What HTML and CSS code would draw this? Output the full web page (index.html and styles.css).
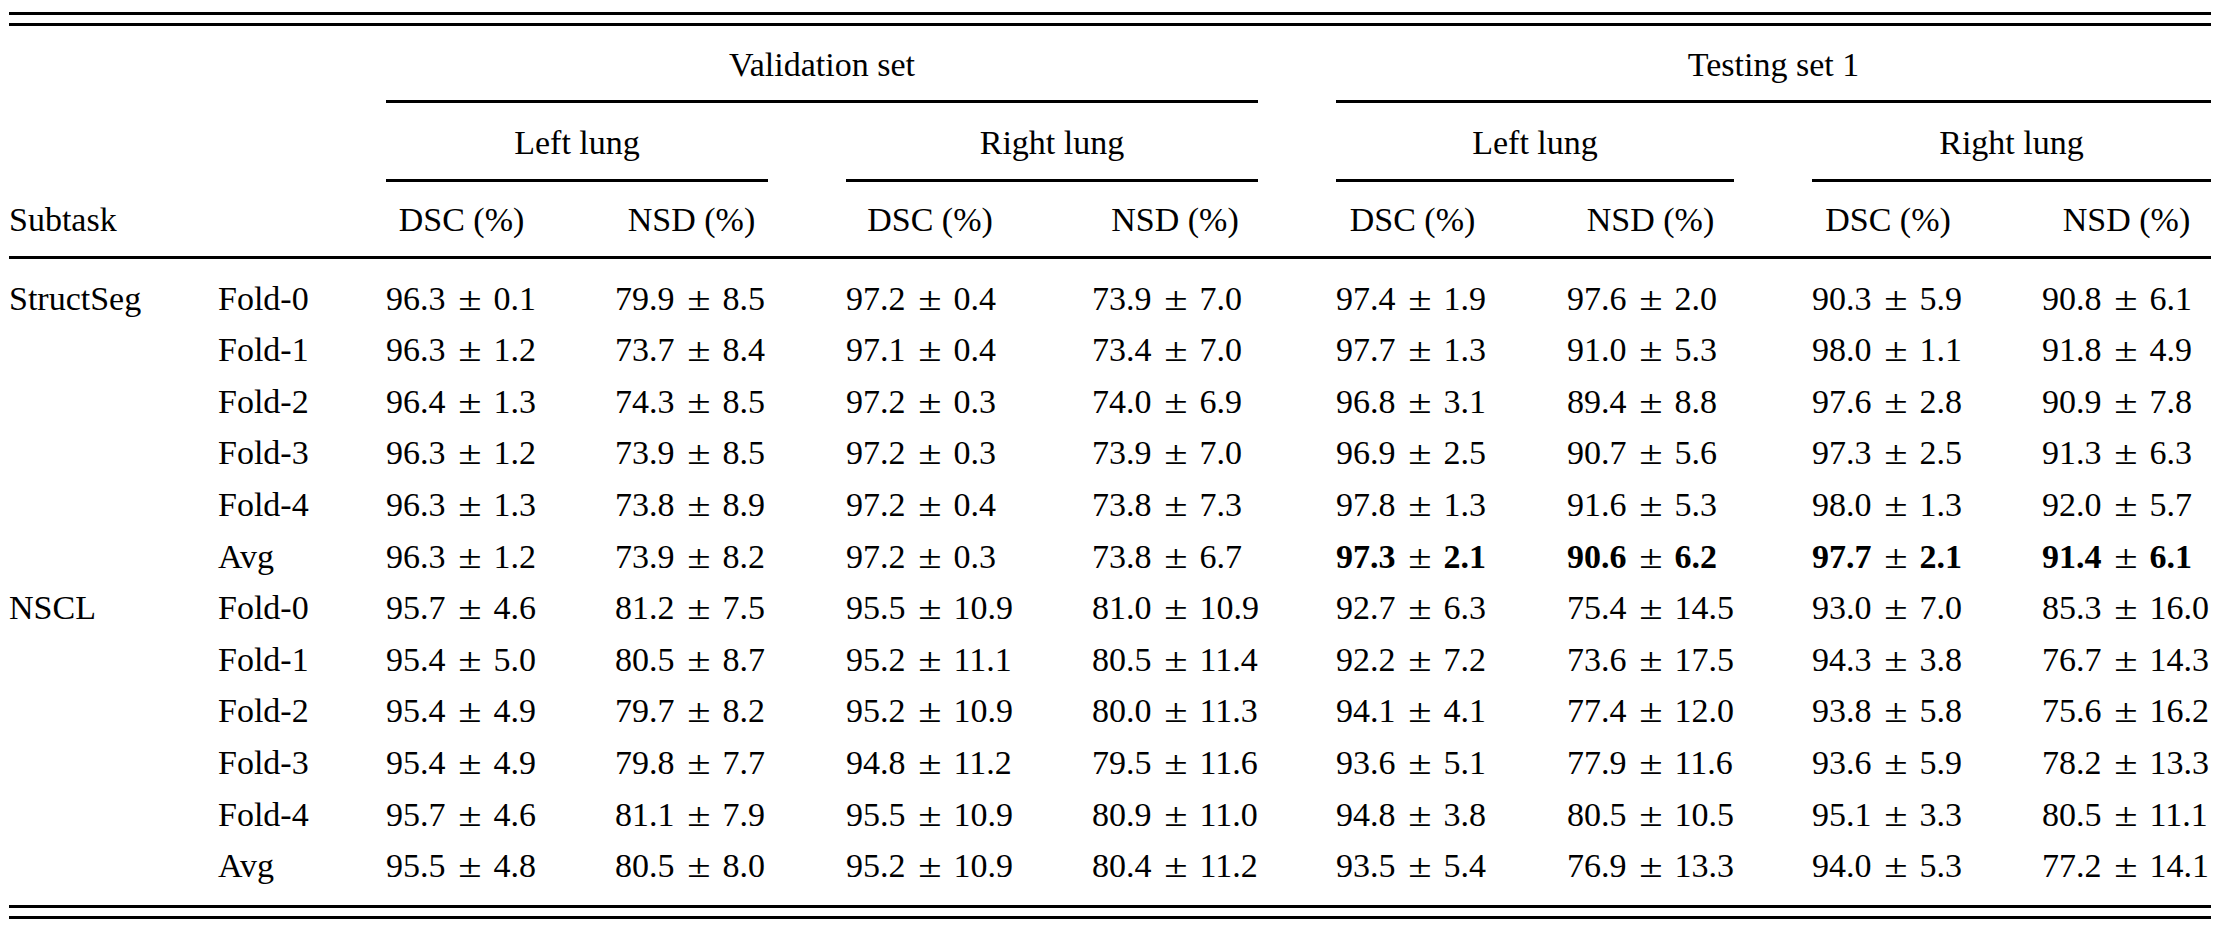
FILE: index.html
```html
<!DOCTYPE html>
<html lang="en">
<head>
<meta charset="utf-8">
<title>Results table</title>
<link rel="stylesheet" href="styles.css">
</head>
<body>
<div class="tbl">
  <div class="line"></div>
  <div class="line top2"></div>

  <div class="grid hrow h1">
    <div class="ctr span-val">Validation set</div>
    <div class="ctr span-test">Testing set 1</div>
  </div>
  <div class="grid cm1">
    <div class="line span-val"></div>
    <div class="line span-test"></div>
  </div>

  <div class="grid hrow h2">
    <div class="ctr span-vl">Left lung</div>
    <div class="ctr span-vr">Right lung</div>
    <div class="ctr span-tl">Left lung</div>
    <div class="ctr span-tr">Right lung</div>
  </div>
  <div class="grid cm2">
    <div class="line span-vl"></div>
    <div class="line span-vr"></div>
    <div class="line span-tl"></div>
    <div class="line span-tr"></div>
  </div>

  <div class="grid hrow h3">
    <div>Subtask</div>
    <div></div>
    <div class="ctr">DSC (%)</div>
    <div class="ctr">NSD (%)</div>
    <div class="ctr">DSC (%)</div>
    <div class="ctr">NSD (%)</div>
    <div class="ctr">DSC (%)</div>
    <div class="ctr">NSD (%)</div>
    <div class="ctr">DSC (%)</div>
    <div class="ctr">NSD (%)</div>
  </div>
  <div class="line mid"></div>

  <div class="tbody">
    <div class="grid row">
      <div>StructSeg</div><div>Fold-0</div>
      <div>96.3<span class="pm">±</span>0.1</div>
      <div>79.9<span class="pm">±</span>8.5</div>
      <div>97.2<span class="pm">±</span>0.4</div>
      <div>73.9<span class="pm">±</span>7.0</div>
      <div>97.4<span class="pm">±</span>1.9</div>
      <div>97.6<span class="pm">±</span>2.0</div>
      <div>90.3<span class="pm">±</span>5.9</div>
      <div>90.8<span class="pm">±</span>6.1</div>
    </div>
    <div class="grid row">
      <div></div><div>Fold-1</div>
      <div>96.3<span class="pm">±</span>1.2</div>
      <div>73.7<span class="pm">±</span>8.4</div>
      <div>97.1<span class="pm">±</span>0.4</div>
      <div>73.4<span class="pm">±</span>7.0</div>
      <div>97.7<span class="pm">±</span>1.3</div>
      <div>91.0<span class="pm">±</span>5.3</div>
      <div>98.0<span class="pm">±</span>1.1</div>
      <div>91.8<span class="pm">±</span>4.9</div>
    </div>
    <div class="grid row">
      <div></div><div>Fold-2</div>
      <div>96.4<span class="pm">±</span>1.3</div>
      <div>74.3<span class="pm">±</span>8.5</div>
      <div>97.2<span class="pm">±</span>0.3</div>
      <div>74.0<span class="pm">±</span>6.9</div>
      <div>96.8<span class="pm">±</span>3.1</div>
      <div>89.4<span class="pm">±</span>8.8</div>
      <div>97.6<span class="pm">±</span>2.8</div>
      <div>90.9<span class="pm">±</span>7.8</div>
    </div>
    <div class="grid row">
      <div></div><div>Fold-3</div>
      <div>96.3<span class="pm">±</span>1.2</div>
      <div>73.9<span class="pm">±</span>8.5</div>
      <div>97.2<span class="pm">±</span>0.3</div>
      <div>73.9<span class="pm">±</span>7.0</div>
      <div>96.9<span class="pm">±</span>2.5</div>
      <div>90.7<span class="pm">±</span>5.6</div>
      <div>97.3<span class="pm">±</span>2.5</div>
      <div>91.3<span class="pm">±</span>6.3</div>
    </div>
    <div class="grid row">
      <div></div><div>Fold-4</div>
      <div>96.3<span class="pm">±</span>1.3</div>
      <div>73.8<span class="pm">±</span>8.9</div>
      <div>97.2<span class="pm">±</span>0.4</div>
      <div>73.8<span class="pm">±</span>7.3</div>
      <div>97.8<span class="pm">±</span>1.3</div>
      <div>91.6<span class="pm">±</span>5.3</div>
      <div>98.0<span class="pm">±</span>1.3</div>
      <div>92.0<span class="pm">±</span>5.7</div>
    </div>
    <div class="grid row">
      <div></div><div>Avg</div>
      <div>96.3<span class="pm">±</span>1.2</div>
      <div>73.9<span class="pm">±</span>8.2</div>
      <div>97.2<span class="pm">±</span>0.3</div>
      <div>73.8<span class="pm">±</span>6.7</div>
      <div class="b">97.3<span class="pm">±</span>2.1</div>
      <div class="b">90.6<span class="pm">±</span>6.2</div>
      <div class="b">97.7<span class="pm">±</span>2.1</div>
      <div class="b">91.4<span class="pm">±</span>6.1</div>
    </div>
    <div class="grid row">
      <div>NSCL</div><div>Fold-0</div>
      <div>95.7<span class="pm">±</span>4.6</div>
      <div>81.2<span class="pm">±</span>7.5</div>
      <div>95.5<span class="pm">±</span>10.9</div>
      <div>81.0<span class="pm">±</span>10.9</div>
      <div>92.7<span class="pm">±</span>6.3</div>
      <div>75.4<span class="pm">±</span>14.5</div>
      <div>93.0<span class="pm">±</span>7.0</div>
      <div>85.3<span class="pm">±</span>16.0</div>
    </div>
    <div class="grid row">
      <div></div><div>Fold-1</div>
      <div>95.4<span class="pm">±</span>5.0</div>
      <div>80.5<span class="pm">±</span>8.7</div>
      <div>95.2<span class="pm">±</span>11.1</div>
      <div>80.5<span class="pm">±</span>11.4</div>
      <div>92.2<span class="pm">±</span>7.2</div>
      <div>73.6<span class="pm">±</span>17.5</div>
      <div>94.3<span class="pm">±</span>3.8</div>
      <div>76.7<span class="pm">±</span>14.3</div>
    </div>
    <div class="grid row">
      <div></div><div>Fold-2</div>
      <div>95.4<span class="pm">±</span>4.9</div>
      <div>79.7<span class="pm">±</span>8.2</div>
      <div>95.2<span class="pm">±</span>10.9</div>
      <div>80.0<span class="pm">±</span>11.3</div>
      <div>94.1<span class="pm">±</span>4.1</div>
      <div>77.4<span class="pm">±</span>12.0</div>
      <div>93.8<span class="pm">±</span>5.8</div>
      <div>75.6<span class="pm">±</span>16.2</div>
    </div>
    <div class="grid row">
      <div></div><div>Fold-3</div>
      <div>95.4<span class="pm">±</span>4.9</div>
      <div>79.8<span class="pm">±</span>7.7</div>
      <div>94.8<span class="pm">±</span>11.2</div>
      <div>79.5<span class="pm">±</span>11.6</div>
      <div>93.6<span class="pm">±</span>5.1</div>
      <div>77.9<span class="pm">±</span>11.6</div>
      <div>93.6<span class="pm">±</span>5.9</div>
      <div>78.2<span class="pm">±</span>13.3</div>
    </div>
    <div class="grid row">
      <div></div><div>Fold-4</div>
      <div>95.7<span class="pm">±</span>4.6</div>
      <div>81.1<span class="pm">±</span>7.9</div>
      <div>95.5<span class="pm">±</span>10.9</div>
      <div>80.9<span class="pm">±</span>11.0</div>
      <div>94.8<span class="pm">±</span>3.8</div>
      <div>80.5<span class="pm">±</span>10.5</div>
      <div>95.1<span class="pm">±</span>3.3</div>
      <div>80.5<span class="pm">±</span>11.1</div>
    </div>
    <div class="grid row">
      <div></div><div>Avg</div>
      <div>95.5<span class="pm">±</span>4.8</div>
      <div>80.5<span class="pm">±</span>8.0</div>
      <div>95.2<span class="pm">±</span>10.9</div>
      <div>80.4<span class="pm">±</span>11.2</div>
      <div>93.5<span class="pm">±</span>5.4</div>
      <div>76.9<span class="pm">±</span>13.3</div>
      <div>94.0<span class="pm">±</span>5.3</div>
      <div>77.2<span class="pm">±</span>14.1</div>
    </div>
  </div>

  <div class="line bot1"></div>
  <div class="line bot2"></div>
</div>
</body>
</html>
```

FILE: styles.css
```css
html, body {
  margin: 0;
  padding: 0;
  background: #ffffff;
}

body {
  font-family: "Liberation Serif", "Times New Roman", serif;
  font-size: 34px;
  color: #000000;
}

.tbl {
  width: 2202px;
  margin-left: 9px;
  padding-top: 12px;
}

.grid {
  display: grid;
  grid-template-columns: 131px 90px 151px 153px 168px 166px 153px 167px 152px 169px;
  column-gap: 78px;
}

.line {
  height: 3px;
  background: #000000;
}

.top2 { margin-top: 8px; }

.hrow,
.row {
  line-height: 51.6px;
  white-space: nowrap;
}

.h1 { margin-top: 12.7px; }
.cm1 { margin-top: 9.7px; }
.h2 { margin-top: 13.7px; }
.cm2 { margin-top: 10.7px; }
.h3 { margin-top: 12.4px; }
.mid { margin-top: 10px; }
.tbody { padding-top: 13.7px; }
.bot1 { margin-top: 13.1px; }
.bot2 { margin-top: 8px; }

.span-val { grid-column: 3 / 7; }
.span-test { grid-column: 7 / 11; }
.span-vl { grid-column: 3 / 5; }
.span-vr { grid-column: 5 / 7; }
.span-tl { grid-column: 7 / 9; }
.span-tr { grid-column: 9 / 11; }

.ctr { text-align: center; }

.pm {
  display: inline-block;
  width: 48px;
  text-align: center;
  font-weight: normal;
  transform: scaleX(1.25);
}

.b { font-weight: bold; }
```
